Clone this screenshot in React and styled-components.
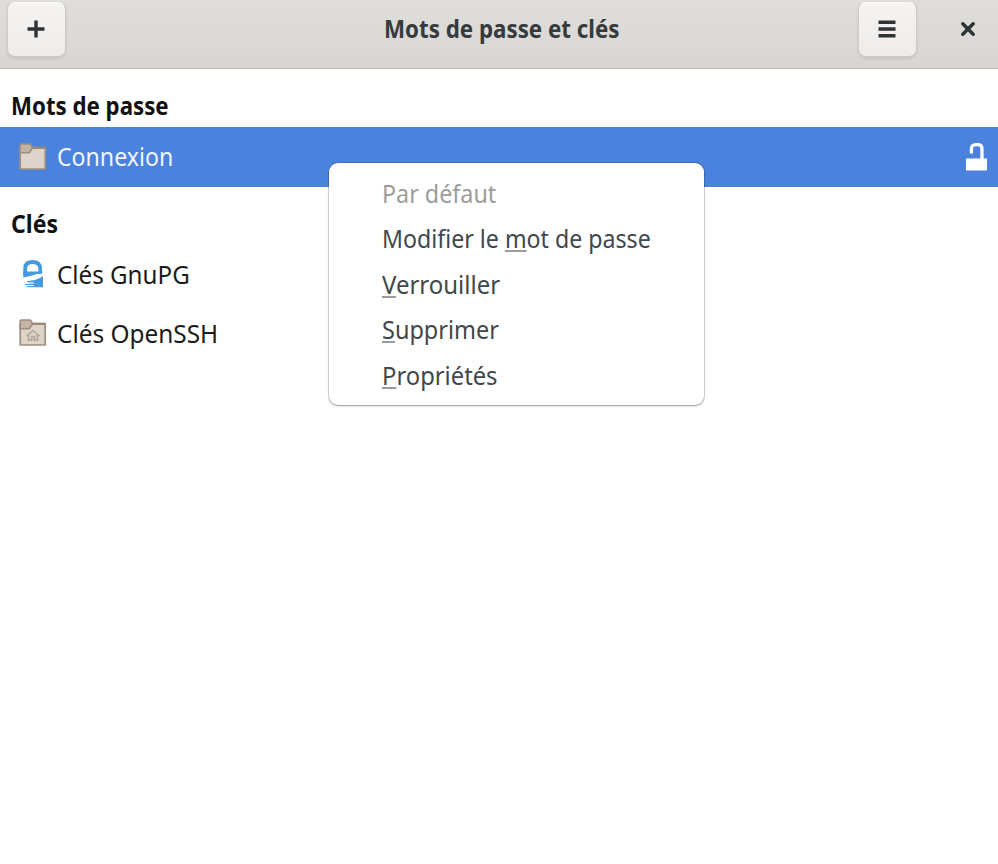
import React from "react";
import styled, { createGlobalStyle } from "styled-components";

const GlobalStyle = createGlobalStyle`
  * { box-sizing: border-box; }
  html, body { margin: 0; height: 100%; background: #fff; overflow: hidden; }
  body { font-family: "Noto Sans", "Open Sans", sans-serif; font-size: 24.8px; color: #1b1b1b; }
`;

const Window = styled.main`
  width: 100%;
  height: 864px;
  background: #fff;
`;

const HeaderBar = styled.header`
  display: grid;
  grid-template-columns: 142px 1fr 137px;
  height: 69px;
  padding: 1px 7px 0 7px;
  background: linear-gradient(#dfdedb, #d9d5d2);
  border-bottom: 1px solid #bfb8b1;
`;

const HeaderEnd = styled.div`
  display: flex;
  justify-content: flex-end;
`;

const HeaderButton = styled.button`
  display: flex;
  align-items: center;
  justify-content: center;
  flex: none;
  width: 59px;
  height: 56px;
  padding: 0 1px 0 0;
  color: #2e3436;
  border: 1px solid #cfcac4;
  border-top-color: #dedbd7;
  border-radius: 8px;
  background: linear-gradient(#f5f4f3, #edecea);
  box-shadow: inset 0 1px #fbfbfa, 0 2px 3px rgba(0, 0, 0, 0.09);
`;

const CloseButton = styled.button`
  display: flex;
  align-items: center;
  justify-content: center;
  flex: none;
  width: 60px;
  height: 56px;
  margin: 0 -7px 0 21px;
  padding: 0;
  border: 0;
  background: none;
  color: #2e3436;
`;

const Label = styled.span`
  display: inline-block;
  white-space: nowrap;
  line-height: 34px;
  transform: scaleX(${(p) => p.$stretch || 1});
  transform-origin: ${(p) => p.$origin || "left"} center;
`;

const Title = styled.h1`
  margin: 10px 0 0;
  font-size: inherit;
  font-weight: 700;
  text-align: center;
  color: #353b3d;
`;

const SectionTitle = styled.h2`
  display: flex;
  align-items: center;
  height: ${(p) => p.$height}px;
  margin: 0;
  padding: 14px 0 0 11px;
  font-size: inherit;
  font-weight: 700;
  color: #111;
`;

const KeyringRow = styled.div`
  display: flex;
  align-items: center;
  height: ${(p) => (p.$selected ? 60 : 59)}px;
  padding: 0 11px 0 19px;
  background: ${(p) => (p.$selected ? "#4a82dd" : "#fff")};
  color: ${(p) => (p.$selected ? "#f0f5fd" : "#1b1b1b")};

  ${Label} {
    margin-bottom: ${(p) => (p.$selected ? 2 : 0)}px;
  }
`;

const RowIcon = styled.span`
  display: flex;
  width: 37.5px;
  flex: none;
`;

const LockState = styled.span`
  display: flex;
  margin-left: auto;
`;

const ContextMenu = styled.nav`
  position: absolute;
  left: 329px;
  top: 163px;
  width: 375px;
  height: 242px;
  padding: 7px 0 0 53px;
  background: #fff;
  border-radius: 9px;
  box-shadow: 0 0 0 1px rgba(0, 0, 0, 0.12), 0 1px 2px rgba(0, 0, 0, 0.32);
`;

const MenuItem = styled.div`
  display: flex;
  align-items: center;
  height: 45.5px;
  color: ${(p) => (p.$disabled ? "#9b9d9d" : "#41474a")};
`;

const Mnemonic = styled.span`
  text-decoration: underline;
  text-decoration-color: #9a9c9d;
  text-decoration-thickness: 2px;
  text-underline-offset: 2px;
  text-decoration-skip-ink: none;
`;

const PlusIcon = () => (
  <svg width="18" height="18" viewBox="0 0 18 18">
    <path d="M9 .5V17.5M.5 9H17.5" stroke="currentColor" strokeWidth="3.4" />
  </svg>
);

const MenuIcon = () => (
  <svg width="18" height="18" viewBox="0 0 18 18">
    <path d="M.5 2.2H17.5M.5 9H17.5M.5 15.8H17.5" stroke="currentColor" strokeWidth="3.4" />
  </svg>
);

const CloseIcon = () => (
  <svg width="16" height="16" viewBox="0 0 16 16">
    <path d="M2.8 2.8L13.2 13.2M13.2 2.8L2.8 13.2" stroke="currentColor" strokeWidth="3.5" strokeLinecap="round" />
  </svg>
);

const FolderIcon = ({ home }) => (
  <svg width="28" height="28" viewBox="0 0 28 28">
    <path d="M1.2 5H26.2V26H1.2Z" fill="#ddd4cb" stroke="#a08e80" strokeWidth="1.7" strokeLinejoin="round" />
    <path d="M1.2 9.8V2.2Q1.2 1 2.4 1H10.5Q11.5 1 12 2L13.6 4.8 10.8 9Q10.3 9.8 9.2 9.8Z" fill="#c4b4a5" stroke="#a08e80" strokeWidth="1.6" />
    <path d="M13.4 4.8H26.8" stroke="#9c8979" strokeWidth="2.4" />
    {home && (
      <path d="M7.5 17L14 11.5 20.5 17M9.5 16V21.3H12.7V17.5H15.3V21.3H18.5V16" fill="none" stroke="#b7a697" strokeWidth="1.6" />
    )}
  </svg>
);

const GnuPGIcon = () => (
  <svg width="28" height="28" viewBox="0 0 28 28">
    <path d="M6.2 14V8.4Q6.2 2 13.5 2T21.2 8.4V14" fill="none" stroke="#479ade" strokeWidth="3.8" />
    <path d="M4.3 11.6H23.1V13.2Q16 14.4 12 16.2L4.1 18.3Z" fill="#479ade" />
    <path d="M24 16V27.2H7.5V26.2L15 25.9V25L6 24.9V23.9L15 23.4V22.5L8 22.3V21.3L16 20Q20.5 18.8 24 16Z" fill="#479ade" />
    <path d="M3 18.2C9 18.2 12 15 24 14" fill="none" stroke="#fff" strokeWidth="1.2" />
  </svg>
);

const UnlockedIcon = () => (
  <svg width="21" height="28" viewBox="0 0 21 28">
    <path d="M0 15.5H21V27.5H0Z" fill="#fff" />
    <path d="M5.4 10.5V5.9Q5.4 1.7 9.8 1.7H11.8Q16 1.7 16 5.9V17" fill="none" stroke="#fff" strokeWidth="3.3" />
  </svg>
);

export default function App() {
  return (
    <>
      <GlobalStyle />
      <Window>
        <HeaderBar>
          <HeaderButton aria-label="Ajouter"><PlusIcon /></HeaderButton>
          <Title><Label $stretch={0.9} $origin="center">Mots de passe et clés</Label></Title>
          <HeaderEnd>
            <HeaderButton aria-label="Menu"><MenuIcon /></HeaderButton>
            <CloseButton aria-label="Fermer"><CloseIcon /></CloseButton>
          </HeaderEnd>
        </HeaderBar>

        <SectionTitle $height={58}><Label $stretch={0.897}>Mots de passe</Label></SectionTitle>
        <KeyringRow $selected>
          <RowIcon><FolderIcon /></RowIcon>
          <Label $stretch={0.932}>Connexion</Label>
          <LockState><UnlockedIcon /></LockState>
        </KeyringRow>
        <SectionTitle $height={57}><Label $stretch={0.93}>Clés</Label></SectionTitle>
        <KeyringRow>
          <RowIcon><GnuPGIcon /></RowIcon>
          <Label $stretch={0.975}>Clés GnuPG</Label>
        </KeyringRow>
        <KeyringRow>
          <RowIcon><FolderIcon home /></RowIcon>
          <Label $stretch={0.983}>Clés OpenSSH</Label>
        </KeyringRow>

        <ContextMenu>
          <MenuItem $disabled><Label $stretch={0.94}>Par défaut</Label></MenuItem>
          <MenuItem><Label $stretch={0.934}>Modifier le <Mnemonic>m</Mnemonic>ot de passe</Label></MenuItem>
          <MenuItem><Label $stretch={0.967}><Mnemonic>V</Mnemonic>errouiller</Label></MenuItem>
          <MenuItem><Label $stretch={0.946}><Mnemonic>S</Mnemonic>upprimer</Label></MenuItem>
          <MenuItem><Label $stretch={0.959}><Mnemonic>P</Mnemonic>ropriétés</Label></MenuItem>
        </ContextMenu>
      </Window>
    </>
  );
}
